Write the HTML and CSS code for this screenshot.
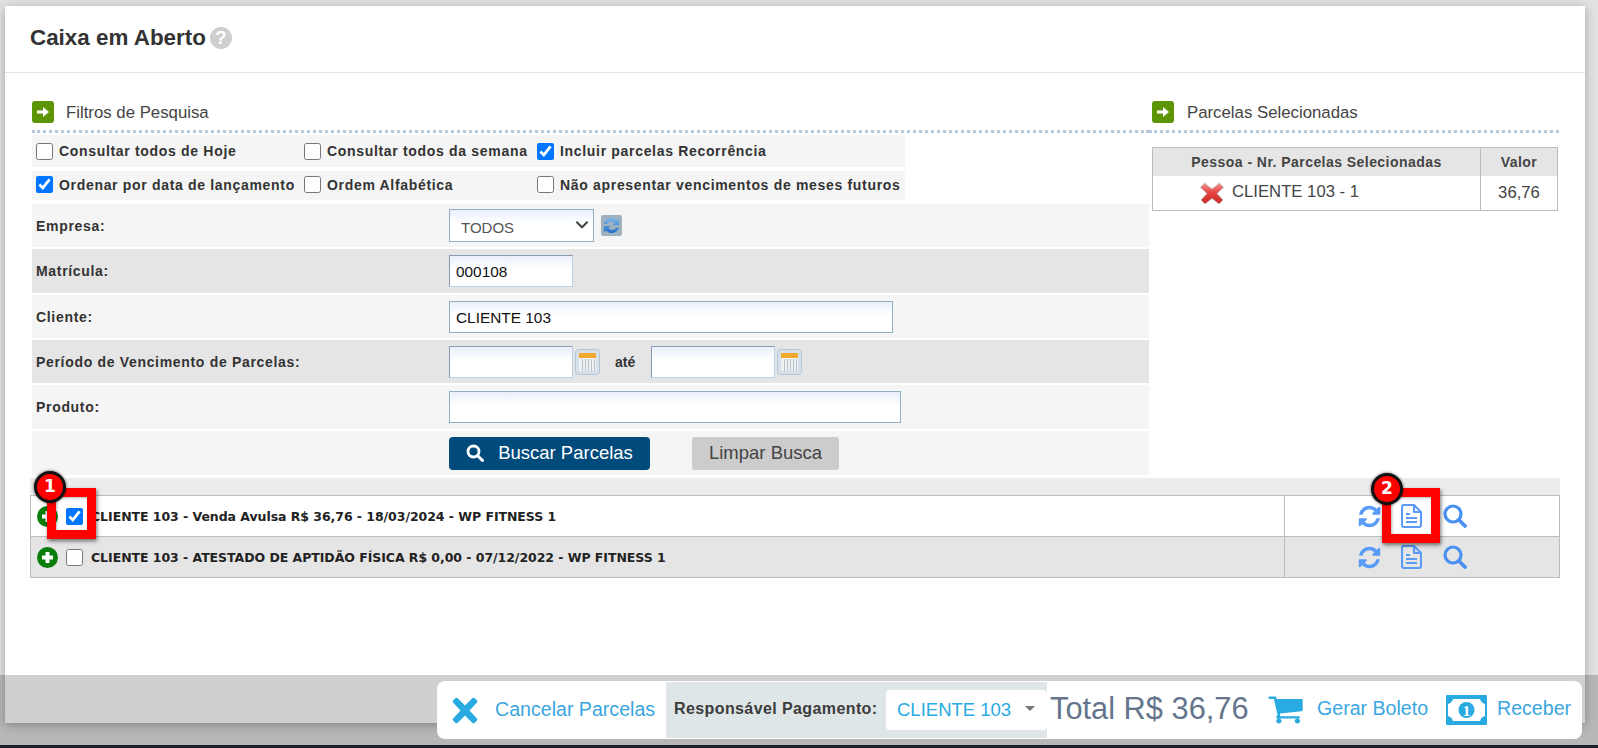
FILE: index.html
```html
<!DOCTYPE html>
<html lang="pt-BR">
<head>
<meta charset="utf-8">
<title>Caixa em Aberto</title>
<link rel="stylesheet" href="styles.css">
</head>
<body>
<div class="screen">
  <div class="panel">
    <header class="head">
      <h1 class="title">Caixa em Aberto</h1>
      <span class="help">?</span>
    </header>
    <div class="columns">
      <section class="filters">
        <div class="section-head">
          <svg class="arrow" viewBox="0 0 22 22"><rect width="22" height="22" rx="3" fill="#5c9404"/><path d="M5 9.500h6V6l6 5-6 5v-3.500H5z" fill="#fff"/></svg>
          <span>Filtros de Pesquisa</span>
        </div>
        <div class="checks checks-a">
          <label class="chk"><input type="checkbox">Consultar todos de Hoje</label>
          <label class="chk"><input type="checkbox">Consultar todos da semana</label>
          <label class="chk"><input type="checkbox" checked>Incluir parcelas Recorrência</label>
        </div>
        <div class="checks checks-b">
          <label class="chk"><input type="checkbox" checked>Ordenar por data de lançamento</label>
          <label class="chk"><input type="checkbox">Ordem Alfabética</label>
          <label class="chk"><input type="checkbox">Não apresentar vencimentos de meses futuros</label>
        </div>
        <div class="form-row light">
          <label class="lbl">Empresa:</label>
          <div class="select-box"><span>TODOS</span><svg class="chev" viewBox="0 0 12 8"><path d="M1 1.500l5 5 5-5" fill="none" stroke="#444" stroke-width="1.800"/></svg></div>
          <svg class="sync" viewBox="0 0 21 21"><defs><linearGradient id="syncg" x1="0" y1="0" x2="0" y2="1"><stop offset="0" stop-color="#7fb6ea"/><stop offset="1" stop-color="#1f6fc6"/></linearGradient></defs><rect width="21" height="21" rx="2" fill="#9fb0bf"/><path d="M3 9a7.500 7.500 0 0 1 13-3.500l2-2V10h-6.500l2-2A4.500 4.500 0 0 0 6 9zM18 12a7.500 7.500 0 0 1-13 3.500l-2 2V11h6.500l-2 2a4.500 4.500 0 0 0 7.500 0z" fill="url(#syncg)"/></svg>
        </div>
        <div class="form-row dark">
          <label class="lbl">Matrícula:</label>
          <div class="text-input w-short">000108</div>
        </div>
        <div class="form-row light">
          <label class="lbl">Cliente:</label>
          <div class="text-input blue w-client">CLIENTE 103</div>
        </div>
        <div class="form-row dark short">
          <label class="lbl">Período de Vencimento de Parcelas:</label>
          <div class="text-input w-short"></div>
          <svg class="cal" viewBox="0 0 25 26"><rect x=".5" y=".5" width="24" height="25" rx="3" fill="#d5e0ea" stroke="#b4c6d6"/><rect x="4" y="4" width="17" height="18" fill="#eef1f3"/><rect x="4" y="4" width="17" height="5" fill="#f0a92e"/><path d="M7.500 10v12M10.500 10v12M13.500 10v12M16.500 10v12M19.500 10v12" stroke="#b9c2c9"/></svg>
          <span class="ate">até</span>
          <div class="text-input"></div>
          <svg class="cal" viewBox="0 0 25 26"><rect x=".5" y=".5" width="24" height="25" rx="3" fill="#d5e0ea" stroke="#b4c6d6"/><rect x="4" y="4" width="17" height="18" fill="#eef1f3"/><rect x="4" y="4" width="17" height="5" fill="#f0a92e"/><path d="M7.500 10v12M10.500 10v12M13.500 10v12M16.500 10v12M19.500 10v12" stroke="#b9c2c9"/></svg>
        </div>
        <div class="form-row light tall">
          <label class="lbl">Produto:</label>
          <div class="text-input blue w-prod"></div>
        </div>
        <div class="form-row light tall">
          <span class="lbl"></span>
          <button class="btn btn-primary"><svg class="btn-ico" viewBox="0 0 18 18"><circle cx="7.500" cy="7.500" r="5.500" fill="none" stroke="#fff" stroke-width="2.800"/><path d="M11.500 11.500l5 5" stroke="#fff" stroke-width="3" stroke-linecap="round"/></svg>Buscar Parcelas</button>
          <button class="btn btn-plain">Limpar Busca</button>
        </div>
      </section>
      <aside class="selected">
        <div class="section-head side">
          <svg class="arrow" viewBox="0 0 22 22"><rect width="22" height="22" rx="3" fill="#5c9404"/><path d="M5 9.500h6V6l6 5-6 5v-3.500H5z" fill="#fff"/></svg>
          <span>Parcelas Selecionadas</span>
        </div>
        <table class="sel-table">
          <thead><tr><th>Pessoa - Nr. Parcelas Selecionadas</th><th>Valor</th></tr></thead>
          <tbody><tr>
            <td class="who"><svg class="x-red" viewBox="0 0 24 24"><defs><linearGradient id="xg" x1="0" y1="0" x2="0" y2="1"><stop offset="0" stop-color="#f59a94"/><stop offset=".45" stop-color="#e8433f"/><stop offset="1" stop-color="#c92a28"/></linearGradient></defs><path d="M4.500 2l7.500 6 7.500-6 4 4.500-6.500 6 6 6.500-4 4-7-5.500-7 5.500-4-4 6-6.500-6.500-6z" fill="url(#xg)" stroke="#b9b9b9" stroke-width=".8"/></svg>CLIENTE 103 - 1</td>
            <td class="val">36,76</td>
          </tr></tbody>
        </table>
      </aside>
    </div>
    <div class="results">
      <div class="band"></div>
      <div class="res-row first">
        <div class="res-main">
          <svg class="plus" viewBox="0 0 21 21"><circle cx="10.500" cy="10.500" r="10.500" fill="#0a7d0a"/><path d="M10.500 5v11M5 10.500h11" stroke="#fff" stroke-width="4"/></svg>
          <input class="res-chk" type="checkbox" checked>
          <span class="res-text">CLIENTE 103 - Venda Avulsa R$ 36,76 - 18/03/2024 - WP FITNESS 1</span>
        </div>
        <div class="res-actions">
          <svg class="act" viewBox="0 0 1792 1792"><path d="M1639 1056q0 5-1 7-64 268-268 434.500t-478 166.500q-146 0-282.500-55t-243.500-157l-129 129q-19 19-45 19t-45-19-19-45v-448q0-26 19-45t45-19h448q26 0 45 19t19 45-19 45l-137 137q71 66 161 102t187 36q134 0 250-65t186-179q11-17 53-117 8-23 30-23h192q13 0 22.500 9.500t9.500 22.500zm25-800v448q0 26-19 45t-45 19h-448q-26 0-45-19t-19-45 19-45l138-138q-148-137-349-137-134 0-250 65t-186 179q-11 17-53 117-8 23-30 23h-199q-13 0-22.500-9.500t-9.500-22.500v-7q65-268 270-434.500t480-166.500q146 0 284 55.500t245 156.500l130-129q19-19 45-19t45 19 19 45z"/></svg>
          <svg class="act-doc" viewBox="0 0 21 24"><path d="M3 1h10l7 7v13a2 2 0 0 1-2 2H3a2 2 0 0 1-2-2V3a2 2 0 0 1 2-2zM13 1v7h7M5 10h4M5 14h11M5 18h11" fill="none" stroke="#5a9bf8" stroke-width="2.100" stroke-linejoin="round"/></svg>
          <svg class="act-find" viewBox="0 0 24 24"><circle cx="10" cy="10" r="8" fill="none" stroke="#4a90f0" stroke-width="3.200"/><path d="M16 16l6 6" stroke="#4a90f0" stroke-width="3.800" stroke-linecap="round"/></svg>
        </div>
      </div>
      <div class="res-row grey">
        <div class="res-main">
          <svg class="plus" viewBox="0 0 21 21"><circle cx="10.500" cy="10.500" r="10.500" fill="#0a7d0a"/><path d="M10.500 5v11M5 10.500h11" stroke="#fff" stroke-width="4"/></svg>
          <input class="res-chk" type="checkbox">
          <span class="res-text">CLIENTE 103 - ATESTADO DE APTIDÃO FÍSICA R$ 0,00 - 07/12/2022 - WP FITNESS 1</span>
        </div>
        <div class="res-actions">
          <svg class="act" viewBox="0 0 1792 1792"><path d="M1639 1056q0 5-1 7-64 268-268 434.500t-478 166.500q-146 0-282.500-55t-243.500-157l-129 129q-19 19-45 19t-45-19-19-45v-448q0-26 19-45t45-19h448q26 0 45 19t19 45-19 45l-137 137q71 66 161 102t187 36q134 0 250-65t186-179q11-17 53-117 8-23 30-23h192q13 0 22.500 9.500t9.500 22.500zm25-800v448q0 26-19 45t-45 19h-448q-26 0-45-19t-19-45 19-45l138-138q-148-137-349-137-134 0-250 65t-186 179q-11 17-53 117-8 23-30 23h-199q-13 0-22.500-9.500t-9.500-22.500v-7q65-268 270-434.500t480-166.500q146 0 284 55.500t245 156.500l130-129q19-19 45-19t45 19 19 45z"/></svg>
          <svg class="act-doc" viewBox="0 0 21 24"><path d="M3 1h10l7 7v13a2 2 0 0 1-2 2H3a2 2 0 0 1-2-2V3a2 2 0 0 1 2-2zM13 1v7h7M5 10h4M5 14h11M5 18h11" fill="none" stroke="#5a9bf8" stroke-width="2.100" stroke-linejoin="round"/></svg>
          <svg class="act-find" viewBox="0 0 24 24"><circle cx="10" cy="10" r="8" fill="none" stroke="#4a90f0" stroke-width="3.200"/><path d="M16 16l6 6" stroke="#4a90f0" stroke-width="3.800" stroke-linecap="round"/></svg>
        </div>
      </div>
    </div>
  </div>
  <div class="taskbar"></div>

  <div class="dim"></div>

  <div class="mark mark-1"></div>
  <div class="badge badge-1">1</div>
  <div class="mark mark-2"></div>
  <div class="badge badge-2">2</div>

  <div class="action-bar">
    <a class="bar-link cancel"><svg class="bar-x" viewBox="0 0 26 27"><path d="M6 1.500l7 7 7-7a2 2 0 0 1 3 0l1.500 1.500a2 2 0 0 1 0 3l-7 7.500 7 7.500a2 2 0 0 1 0 3L23 25.500a2 2 0 0 1-3 0l-7-7-7 7a2 2 0 0 1-3 0L1.500 24a2 2 0 0 1 0-3l7-7.500-7-7.500a2 2 0 0 1 0-3L3 1.500a2 2 0 0 1 3 0z" fill="#29abe2"/></svg>Cancelar Parcelas</a>
    <div class="payer">
      <span class="payer-label">Responsável Pagamento:</span>
      <div class="payer-select"><span>CLIENTE 103</span><i class="caret"></i></div>
    </div>
    <span class="total">Total R$ 36,76</span>
    <a class="bar-link boleto"><svg class="bar-cart" viewBox="0 0 1792 1664" preserveAspectRatio="none"><path transform="translate(0 -128)" d="M704 1536q0 52-38 90t-90 38-90-38-38-90 38-90 90-38 90 38 38 90zm896 0q0 52-38 90t-90 38-90-38-38-90 38-90 90-38 90 38 38 90zm128-1088v512q0 24-16.500 42.500t-40.500 21.500l-1044 122q13 60 13 70 0 16-24 64h920q26 0 45 19t19 45-19 45-45 19h-1024q-26 0-45-19t-19-45q0-11 8-31.500t16-36 21.500-40 15.500-29.500l-177-823h-204q-26 0-45-19t-19-45 19-45 45-19h256q16 0 28.500 6.500t19.500 15.500 13 24.500 8 26 5.500 29.500 4.500 26h1201q26 0 45 19t19 45z"/></svg><span class="bar-text">Gerar Boleto</span></a>
    <a class="bar-link receive"><svg class="bar-money" viewBox="0 0 41 30"><rect width="41" height="30" rx="1" fill="#29abe2"/><path d="M7 4h27q1 4 5 5v12q-4 1-5 5H7q-1-4-5-5V9q4-1 5-5z" fill="#fff"/><circle cx="20.500" cy="15" r="8" fill="#29abe2"/><text class="money-one" x="20.500" y="20.500" text-anchor="middle">1</text></svg><span class="bar-text">Receber</span></a>
  </div>
</div>
</body>
</html>
```
FILE: styles.css
```css
* { box-sizing: border-box; }
html, body { margin: 0; padding: 0; }
body { font-family: "Liberation Sans", Arial, sans-serif; color: #333; }

.screen {
  position: relative;
  width: 1598px;
  height: 748px;
  overflow: hidden;
  background: #e2e2e2;
  display: flex;
  flex-direction: column;
  padding: 6px 13px 0 5px;
}

.panel {
  height: 717px;
  background: #fff;
  box-shadow: 0 2px 10px rgba(0, 0, 0, .28);
  flex: none;
}

.head {
  height: 67px;
  border-bottom: 1px solid #e3e3e3;
  padding: 0 0 3px 25px;
  display: flex;
  align-items: center;
  gap: 4px;
}
.title { margin: 0; font-size: 22.4px; font-weight: 700; color: #333; }
.help {
  width: 22px; height: 22px; border-radius: 50%;
  background: #cfcfcf; color: #fff;
  font-size: 19px; font-weight: 700; line-height: 22px; text-align: center;
}

.columns {
  display: grid;
  grid-template-columns: 1119px 410px;
  padding: 28px 0 0 25px;
}

.filters { padding-left: 2px; }

.section-head {
  height: 32px;
  display: flex;
  align-items: flex-start;
  gap: 12px;
  font-size: 16.8px;
  color: #444;
  border-bottom: 3px dotted #b4c7dc;
  line-height: 24px;
}
.section-head.side { padding-left: 3px; gap: 13px; }
.arrow { width: 22px; height: 22px; flex: none; }

.checks {
  width: 873px;
  background: #f5f5f5;
  display: grid;
  grid-template-columns: 268px 233px 1fr;
  align-items: center;
  padding-left: 4px;
  font-size: 14px;
  font-weight: 700;
  letter-spacing: .68px;
  color: #333;
}
.checks-a { height: 32px; margin-top: 2px; }
.checks-b { height: 29px; margin-top: 4px; margin-bottom: 4px; padding-bottom: 2px; }
.chk { display: flex; align-items: center; gap: 6px; white-space: nowrap; }
.chk input { width: 17px; height: 17px; margin: 0; flex: none; }

.form-row {
  height: 43px;
  margin-bottom: 2px;
  padding-left: 4px;
  display: flex;
  align-items: center;
  font-size: 14px;
}
.form-row.tall { height: 44px; }
.form-row.light { background: #f5f5f5; }
.form-row.dark { background: #e5e5e5; height: 44px; }
.form-row.dark.short { height: 43px; }
.lbl {
  width: 413px;
  flex: none;
  font-weight: 700;
  letter-spacing: .68px;
  color: #333;
}

.select-box {
  width: 145px; height: 33px;
  border: 1px solid #8fb0c0;
  background: linear-gradient(#e9f0fb, #fff 45%);
  display: flex; align-items: center; justify-content: space-between;
  padding: 3px 4px 0 11px;
  font-size: 15px;
  color: #555;
}
.chev { width: 14px; height: 9px; margin-top: -5px; }
.sync { width: 21px; height: 21px; margin-left: 7px; }

.text-input {
  width: 124px; height: 32px;
  border: 1px solid #bcd3ea;
  border-top-color: #8a9ab0;
  border-left-color: #8a9ab0;
  background: linear-gradient(#e9f0fb, #fff 45%);
  padding: 2px 0 0 6px;
  line-height: 28px;
  font-size: 15.4px;
  color: #111;
}
.text-input.blue { border-color: #8fb0c0; }
.w-client { width: 444px; }
.w-prod { width: 452px; }

.cal { width: 25px; height: 26px; margin-left: 2px; flex: none; }
.ate { margin: 0 15px 0 15px; width: 21px; font-weight: 700; color: #333; }

.btn {
  height: 33px;
  border: 0;
  border-radius: 3px;
  font-family: inherit;
  font-size: 18.5px;
  padding: 0;
  display: flex; align-items: center; justify-content: center;
}
.btn-primary { width: 201px; background: #004a7c; color: #fff; gap: 14px; border-radius: 4px; }
.btn-plain { width: 147px; background: #cccccc; color: #444; margin-left: 42px; }
.btn-ico { width: 18px; height: 18px; }

.selected { padding-left: 0; }
.sel-table {
  margin: 14px 0 0 3px;
  width: 406px;
  border-collapse: collapse;
  border: 1px solid #bdbdbd;
  color: #444;
}
.sel-table th {
  height: 28px; background: #e5e5e5; padding: 0;
  font-size: 14px; letter-spacing: .45px; color: #444;
}
.sel-table th + th, .sel-table td + td { border-left: 1px solid #bdbdbd; width: 77px; }
.sel-table td { height: 35px; padding: 0; font-size: 16.7px; background: #fff; }
.who { padding-left: 47px !important; white-space: nowrap; }
.x-red { width: 24px; height: 24px; vertical-align: middle; margin-right: 8px; }
.val { text-align: center; }

.results { margin: 1px 0 0 25px; width: 1530px; }
.band { height: 17px; background: #ececec; }
.res-row {
  height: 41px;
  display: flex;
  border: 1px solid #bdbdbd;
  background: #fff;
}
.res-row.first { height: 42px; }
.res-row.grey { background: #e5e5e5; border-top: 0; }
.res-main {
  width: 1254px;
  display: flex;
  align-items: center;
  padding-left: 6px;
  border-right: 1px solid #bdbdbd;
}
.plus { width: 21px; height: 21px; flex: none; }
.res-chk { width: 17px; height: 17px; margin: 0 8px 0 8px; flex: none; }
.res-text { font-family: "DejaVu Sans", Verdana, sans-serif; font-size: 12.5px; font-weight: 700; letter-spacing: -.05px; color: #222; white-space: nowrap; }
.res-actions { flex: 1; display: flex; align-items: center; padding-left: 72px; fill: #5a9bf8; }
.act { width: 25px; height: 25px; flex: none; }
.act-doc { width: 21px; height: 24px; margin-left: 19px; flex: none; }
.act-find { width: 24px; height: 24px; margin-left: 21px; flex: none; }

.taskbar {
  margin: auto -13px 0 -5px;
  height: 3px;
  background: #1e2030;
  flex: none;
  position: relative;
  z-index: 3;
}

.dim {
  position: absolute;
  left: 0; right: 0; top: 675px; bottom: 3px;
  background: rgba(0, 0, 0, .19);
}
.dim::after {
  content: "";
  position: absolute;
  left: 0; right: 0; bottom: 8px;
  height: 1px;
  background: #b4b4b4;
}

.mark {
  position: absolute;
  border: 9px solid #f00;
  box-shadow: 1px 2px 4px rgba(0, 0, 0, .55), inset 1px 1px 3px rgba(0, 0, 0, .3);
}
.mark-1 { left: 47px; top: 488px; width: 49px; height: 51px; }
.mark-2 { left: 1382px; top: 488px; width: 58px; height: 55px; }

.badge {
  position: absolute;
  width: 32px; height: 32px;
  border-radius: 50%;
  border: 3px solid #111;
  background: #f00;
  color: #fff;
  font-family: "DejaVu Sans", sans-serif;
  font-size: 17px; font-weight: 700;
  line-height: 25px;
  text-align: center;
  box-shadow: 0 0 3px rgba(0,0,0,.7);
}
.badge-1 { left: 34px; top: 471px; }
.badge-2 { left: 1371px; top: 473px; }

.action-bar {
  position: absolute;
  left: 437px; top: 681px;
  width: 1145px; height: 58px;
  background: #fff;
  border-radius: 8px;
  display: flex;
  align-items: center;
}
.bar-link {
  display: flex; align-items: center;
  font-size: 19.6px;
  color: #3aa6e0;
  white-space: nowrap;
}
.cancel { width: 229px; padding-left: 15px; gap: 17px; padding-bottom: 2px; }
.bar-x { width: 26px; height: 27px; flex: none; margin-top: 2px; }
.payer {
  width: 381px; height: 56px;
  background: #dfe6e7;
  display: flex; align-items: center;
  padding-left: 8px;
}
.payer-label { font-size: 16px; font-weight: 700; color: #3c3c3c; letter-spacing: .4px; width: 212px; flex: none; margin-top: -2px; }
.payer-select {
  width: 161px; height: 40px;
  background: #fff;
  border-radius: 4px;
  padding-left: 11px;
  display: flex; align-items: center;
  font-size: 18.500px;
  color: #29abe2;
}
.caret {
  width: 0; height: 0; margin-left: 14px; margin-top: -3px;
  border-left: 5px solid transparent;
  border-right: 5px solid transparent;
  border-top: 5px solid #777;
}
.total { font-size: 30.8px; color: #64758c; margin-left: 3px; width: 217px; flex: none; white-space: nowrap; margin-top: -2px; }
.boleto { width: 179px; gap: 13px; padding-bottom: 2px; }
.bar-text { margin-top: -2px; }
.bar-cart { width: 37px; height: 32px; fill: #29abe2; flex: none; margin-top: 2px; }
.receive { gap: 10px; padding-bottom: 2px; }
.bar-money { width: 41px; height: 30px; flex: none; margin-top: 2px; }
.money-one { font-size: 15px; font-weight: 700; fill: #fff; font-family: "Liberation Serif", serif; }
```
